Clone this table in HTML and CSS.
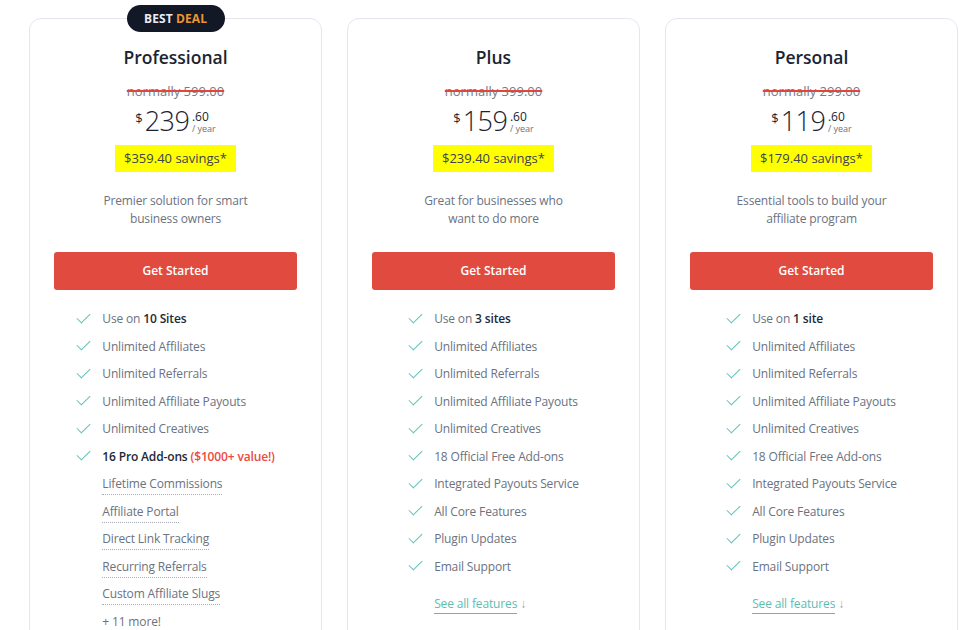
FILE: index.html
```html
<!DOCTYPE html>
<html lang="en">
<head>
<meta charset="utf-8">
<title>Pricing</title>
<link rel="stylesheet" href="styles.css">
</head>
<body>
<div class="plans">
  <div class="card">
    <div class="badge">BEST <span class="deal">DEAL</span></div>
    <h2 class="title">Professional</h2>
    <div class="normally">normally 599.00</div>
    <div class="price"><span class="cur">$</span><span class="amt">239</span><span class="frac"><span class="cents">.60</span><span class="per">/ year</span></span></div>
    <div class="save"><span class="hl">$359.40 savings*</span></div>
    <p class="desc">Premier solution for smart<br>business owners</p>
    <a class="btn">Get Started</a>
    <div class="listwrap">
      <ul class="feats">
        <li class="ck">Use on <b>10 Sites</b></li>
        <li class="ck">Unlimited Affiliates</li>
        <li class="ck">Unlimited Referrals</li>
        <li class="ck">Unlimited Affiliate Payouts</li>
        <li class="ck">Unlimited Creatives</li>
        <li class="ck"><b>16 Pro Add-ons</b> <span class="val">($1000+ value!)</span></li>
        <li class="pl"><span class="dot">Lifetime Commissions</span></li>
        <li class="pl"><span class="dot">Affiliate Portal</span></li>
        <li class="pl"><span class="dot">Direct Link Tracking</span></li>
        <li class="pl"><span class="dot">Recurring Referrals</span></li>
        <li class="pl"><span class="dot">Custom Affiliate Slugs</span></li>
        <li class="pl">+ 11 more!</li>
      </ul>
    </div>
  </div>
  <div class="card">
    <h2 class="title">Plus</h2>
    <div class="normally">normally 399.00</div>
    <div class="price"><span class="cur">$</span><span class="amt">159</span><span class="frac"><span class="cents">.60</span><span class="per">/ year</span></span></div>
    <div class="save"><span class="hl">$239.40 savings*</span></div>
    <p class="desc">Great for businesses who<br>want to do more</p>
    <a class="btn">Get Started</a>
    <div class="listwrap">
      <ul class="feats">
        <li class="ck">Use on <b>3 sites</b></li>
        <li class="ck">Unlimited Affiliates</li>
        <li class="ck">Unlimited Referrals</li>
        <li class="ck">Unlimited Affiliate Payouts</li>
        <li class="ck">Unlimited Creatives</li>
        <li class="ck">18 Official Free Add-ons</li>
        <li class="ck">Integrated Payouts Service</li>
        <li class="ck">All Core Features</li>
        <li class="ck">Plugin Updates</li>
        <li class="ck">Email Support</li>
        <li class="more"><span class="seeall">See all features</span> <span class="arr">↓</span></li>
      </ul>
    </div>
  </div>
  <div class="card">
    <h2 class="title">Personal</h2>
    <div class="normally">normally 299.00</div>
    <div class="price"><span class="cur">$</span><span class="amt">119</span><span class="frac"><span class="cents">.60</span><span class="per">/ year</span></span></div>
    <div class="save"><span class="hl">$179.40 savings*</span></div>
    <p class="desc">Essential tools to build your<br>affiliate program</p>
    <a class="btn">Get Started</a>
    <div class="listwrap">
      <ul class="feats">
        <li class="ck">Use on <b>1 site</b></li>
        <li class="ck">Unlimited Affiliates</li>
        <li class="ck">Unlimited Referrals</li>
        <li class="ck">Unlimited Affiliate Payouts</li>
        <li class="ck">Unlimited Creatives</li>
        <li class="ck">18 Official Free Add-ons</li>
        <li class="ck">Integrated Payouts Service</li>
        <li class="ck">All Core Features</li>
        <li class="ck">Plugin Updates</li>
        <li class="ck">Email Support</li>
        <li class="more"><span class="seeall">See all features</span> <span class="arr">↓</span></li>
      </ul>
    </div>
  </div>
</div>
</body>
</html>
```

FILE: styles.css
```css
* { box-sizing: border-box; }
html, body { margin: 0; padding: 0; background: #fff; }
body {
  font-family: "Open Sans", "Noto Sans", sans-serif;
  color: #374151;
  -webkit-font-smoothing: antialiased;
}
.plans {
  display: flex;
  gap: 25px;
  padding: 18px 0 0 29px;
  align-items: flex-start;
}
.card {
  position: relative;
  width: 293px;
  flex: 0 0 293px;
  border: 1px solid #e6e6ef;
  border-radius: 12px;
  padding: 26px 24px 40px;
  text-align: center;
  background: #fff;
}
.badge {
  position: absolute;
  top: -14px;
  left: 50%;
  transform: translateX(-50%);
  width: 98px;
  height: 27px;
  line-height: 27px;
  border-radius: 14px;
  background: #121826;
  color: #e8edf5;
  font-size: 12px;
  font-weight: 700;
  letter-spacing: 0.1px;
}
.deal { color: #ec9434; }
.title {
  margin: 0;
  font-size: 17.5px;
  line-height: 24px;
  font-weight: 600;
  color: #1c2331;
}
.normally {
  margin-top: 12px;
  font-size: 13px;
  line-height: 20px;
  color: #777a86;
  text-decoration: line-through;
  text-decoration-color: #e0473b;
  text-decoration-thickness: 1.5px;
}
.price {
  display: flex;
  justify-content: center;
  align-items: flex-start;
  height: 40px;
  margin-top: 2px;
  color: #1c2331;
}
.cur { font-size: 13px; line-height: 13px; margin-top: 9px; margin-right: 2px; }
.amt { font-size: 27px; line-height: 34px; font-weight: 300; letter-spacing: -0.5px; margin-top: 1px; }
.frac { display: flex; flex-direction: column; align-items: flex-start; margin-left: 2.5px; margin-top: 8px; }
.cents { font-size: 12px; line-height: 12px; }
.per { font-size: 9px; line-height: 9px; margin-top: 1px; color: #6b7280; }
.save { margin-top: 2px; height: 27px; }
.hl {
  display: inline-block;
  background: #ffff00;
  height: 27px;
  line-height: 27px;
  padding: 0 9px;
  font-size: 13px;
  color: #3c4250;
}
.desc {
  margin: 20px 0 0;
  font-size: 12px;
  line-height: 18px;
  letter-spacing: -0.15px;
  color: #6b7280;
}
.btn {
  display: block;
  margin-top: 24px;
  height: 38px;
  line-height: 38px;
  border-radius: 3px;
  background: #e14b3f;
  color: #fff;
  font-size: 12px;
  font-weight: 600;
}
.listwrap { margin-top: 15px; }
.feats {
  display: inline-block;
  list-style: none;
  margin: 0;
  padding: 0;
  text-align: left;
}
.feats li {
  height: 27.5px;
  line-height: 27.5px;
  font-size: 12px;
  letter-spacing: -0.15px;
  color: #6b7280;
  padding-left: 26px;
  position: relative;
  white-space: nowrap;
}
.feats li.ck::before {
  content: "";
  position: absolute;
  left: 1px;
  top: 7.5px;
  width: 12px;
  height: 6px;
  border-left: 1.5px solid #62c3b8;
  border-bottom: 1.5px solid #62c3b8;
  transform: rotate(-45deg);
  transform-origin: center;
}
.feats b { font-weight: 600; color: #1f2937; }
.val { color: #ec4a40; font-weight: 600; }
.dot { border-bottom: 1px dotted #a8acb5; padding-bottom: 2px; }
.feats li.more { margin-top: 9.5px; }
.seeall { color: #5cbdb3; border-bottom: 1px solid #5cbdb3; padding-bottom: 1px; }
.arr { color: #9ca3af; }
```
